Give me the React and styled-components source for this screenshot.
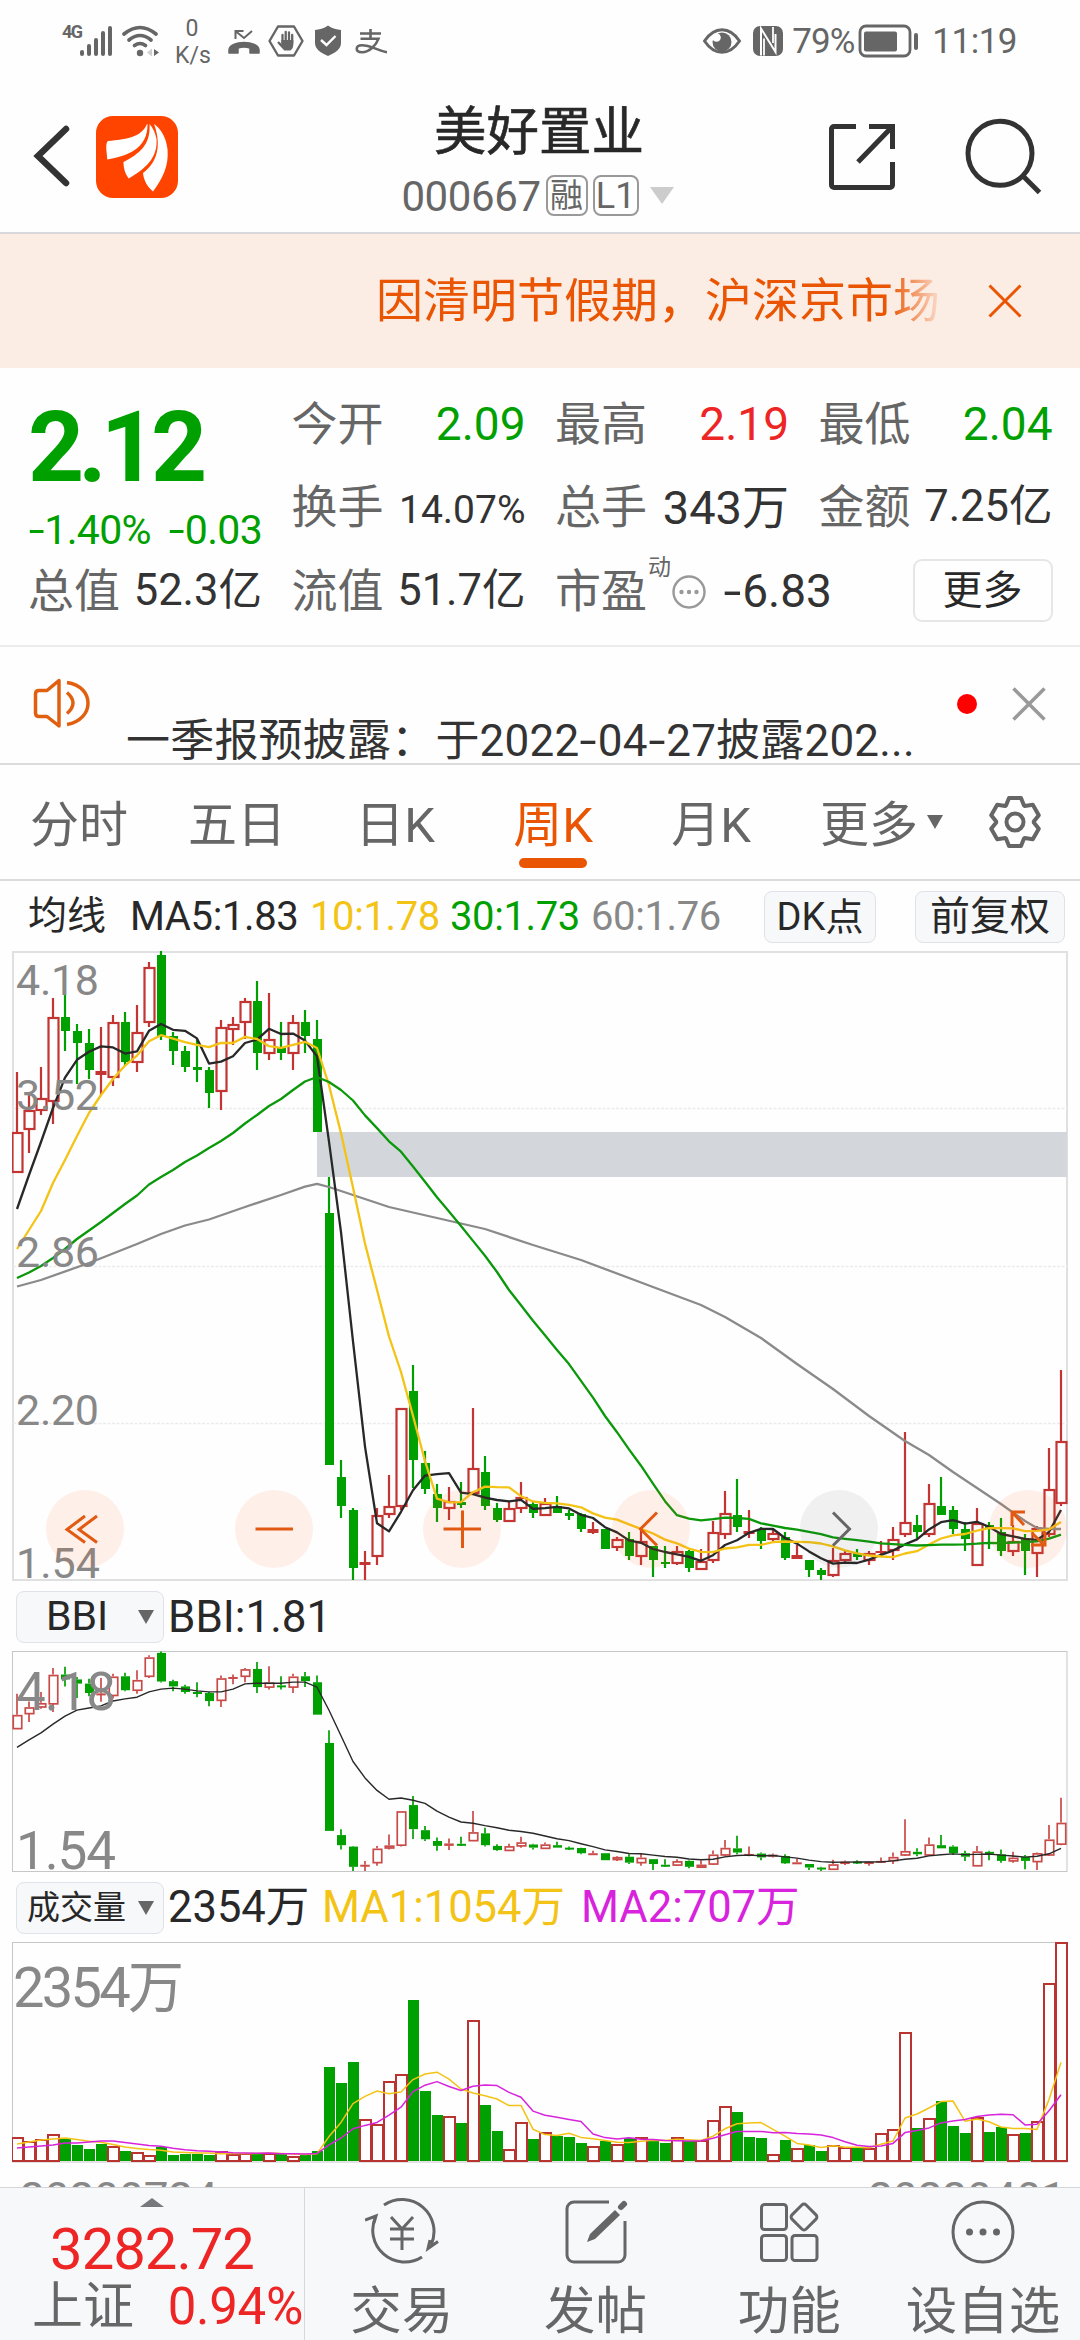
import styled, { createGlobalStyle } from 'styled-components'

const colors = {
  ink: '#282828',
  text: '#333333',
  grey: '#666666',
  muted: '#888888',
  green: '#00a000',
  red: '#ee2525',
  candleRed: '#c23533',
  orange: '#ea5504',
  yellow: '#f3c316',
  purple: '#d823dc',
  panel: '#f7f8fa',
  line: '#dcdcdc',
}

const GlobalStyle = createGlobalStyle`
  * {
    box-sizing: border-box;
  }
  body {
    margin: 0;
    background: #fefefe;
    font-family: Roboto, 'Noto Sans CJK SC', sans-serif;
    line-height: 1;
    color: ${colors.text};
    white-space: nowrap;
  }
  svg {
    display: block;
    flex: none;
  }
`

const Page = styled.main`
  width: 1080px;
  height: 2340px;
  overflow: hidden;
  display: flex;
  flex-direction: column;
`

const Text = styled.span`
  font-size: ${(p) => p.$size}px;
  color: ${(p) => p.$color || colors.text};
  font-weight: ${(p) => p.$weight || 400};
  letter-spacing: ${(p) => p.$track || 0}px;
  width: ${(p) => (p.$width ? `${p.$width}px` : 'auto')};
  margin: ${(p) => p.$margin || 0};
`

const Hyphen = styled.span`
  display: inline-block;
  margin: 0 0.07em;
  transform: scaleX(1.4);
`
const Minus = () => <Hyphen>-</Hyphen>

/* ---------- status bar ---------- */

const StatusBar = styled.div`
  height: 80px;
  flex: none;
  display: flex;
  justify-content: space-between;
  padding: 0 63px 0 62px;
`
const StatusGroup = styled.div`
  display: flex;
  align-items: center;
  height: 81px;
`
const NetSpeed = styled.div`
  width: 34px;
  margin: 2px 18px 0 16px;
  text-align: center;
  font-size: 23px;
  line-height: 27px;
  color: ${colors.grey};
`
const StatusText = styled.span`
  font-size: 35px;
  letter-spacing: ${(p) => p.$track}px;
  margin: 2px ${(p) => p.$right || 0}px 0 ${(p) => p.$left}px;
  color: ${colors.grey};
`
const Generation = styled.span`
  font-size: 18px;
  font-weight: 700;
  letter-spacing: -1.500px;
  margin: -18px 0 0 0;
  width: 17px;
  color: ${colors.grey};
`

const StatusLeftIcons = () => (
  <svg width="160" height="36" viewBox="226 23 160 36" fill="none">
    <path
      d="M228 53v-3c0-10 30-10 30 0v3h-9v-5q-6-2-12 0v5z"
      fill={colors.grey}
      stroke={colors.grey}
      strokeWidth="1.5"
      strokeLinejoin="round"
    />
    <path d="M234.500 39V31h8M235 31.500l8 6.500 8-7" stroke={colors.grey} strokeWidth="2" />
    <path
      d="M277 26.500h16l8.500 14.500-8.500 14.500h-16l-8.500-14.500z"
      stroke={colors.grey}
      strokeWidth="2.400"
      strokeLinejoin="round"
    />
    <path d="M281.500 43V35M284.700 42V31.800M288 42V32.500M291.200 43V35" stroke={colors.grey} strokeWidth="2.300" strokeLinecap="round" />
    <path d="M280.300 40h12v5c0 3-2 5-3 5.500h-6l-6.500-7c-1-1.500 .6-2.600 1.700-1.600l2 1.800z" fill={colors.grey} />
    <path d="M327 25.500c4 3 9 4 13 4.500v13c0 6-6 10-13 13-7-3-13-7-13-13V30c4-.5 9-1.500 13-4.500z" fill={colors.grey} />
    <path d="M320 40l5.500 5 9-9" stroke="#fff" strokeWidth="2.400" />
    <path
      d="M359 33.500h21M369.500 29v10M359.500 38.700h18c-2 6-9 13.500-16.500 13.500-7 0-7-7 0-7 9 0 14 5 25 7"
      stroke={colors.grey}
      strokeWidth="2.600"
    />
  </svg>
)

const Signal = () => (
  <svg width="80" height="32" viewBox="79 24 80 32" fill={colors.grey}>
    <rect x="80" y="49" width="4" height="6" rx="2" />
    <rect x="87" y="43" width="4" height="12" rx="2" />
    <rect x="94" y="37" width="4" height="18" rx="2" />
    <rect x="101" y="30" width="4" height="25" rx="2" />
    <rect x="108" y="25" width="4" height="30" rx="2" />
    <g fill="none" stroke={colors.grey} strokeWidth="3.600" strokeLinecap="round">
      <path d="M124 33q16-13 32 0M129 39q11-9 22 0M134.500 44.500q5.500-4 11 0" />
    </g>
    <circle cx="140" cy="52" r="3.200" />
    <path d="M152 47.500v8l-5-4z" fill="#cfcfcf" />
    <path d="M154 48v7l5-3.500z" />
  </svg>
)

const EyeNfc = () => (
  <svg width="80" height="32" viewBox="703 24 80 32">
    <path d="M704.500 40c10-15 25-15 35 0-10 15-25 15-35 0z" fill="none" stroke={colors.grey} strokeWidth="3" />
    <circle cx="722" cy="41" r="9.500" fill={colors.grey} />
    <circle cx="716.500" cy="36.500" r="4.300" fill="#fefefe" />
    <rect x="753" y="25" width="30" height="30" rx="7" fill={colors.grey} />
    <path d="M761 54.500V27.500L775.500 51V33" fill="none" stroke="#fefefe" strokeWidth="2" />
    <path d="M764 37.500v17M773 26v16" stroke="#fefefe" strokeWidth="1.800" />
  </svg>
)

const Battery = () => (
  <svg width="62" height="34" viewBox="861 23 62 34">
    <rect x="863" y="25" width="50" height="30" rx="6" fill="none" stroke={colors.grey} strokeWidth="2.800" />
    <rect x="867" y="30.500" width="33" height="20" rx="2" fill={colors.grey} />
    <rect x="917" y="32" width="4" height="17" rx="2" fill={colors.grey} />
  </svg>
)

/* ---------- header ---------- */

const Header = styled.header`
  height: 154px;
  flex: none;
  display: flex;
  justify-content: space-between;
  align-items: flex-start;
  border-bottom: 2px solid #d8d8dc;
  padding: 36px 37px 0 33px;
`
const HeaderSide = styled.div`
  width: 215px;
  display: flex;
  justify-content: ${(p) => p.$align};
  gap: ${(p) => p.$gap}px;
`
const TitleBlock = styled.div`
  display: flex;
  flex-direction: column;
  align-items: center;
  margin: -10px 0 0 2px;
`
const Title = styled.h1`
  margin: 0;
  font-size: 52.500px;
  font-weight: 400;
  -webkit-text-stroke: 0.6px ${colors.ink};
  color: ${colors.ink};
`
const CodeRow = styled.div`
  display: flex;
  align-items: center;
  margin: 15px 3px 0 0;
  color: ${colors.grey};
`
const Badge = styled.span`
  height: 41px;
  width: ${(p) => p.$width}px;
  margin-left: 5px;
  border: 2px solid #999;
  border-radius: 8px;
  display: flex;
  align-items: center;
  justify-content: center;
  font-size: ${(p) => p.$size}px;
`
const Caret = styled.i`
  width: 0;
  height: 0;
  border: ${(p) => p.$w}px solid transparent;
  border-bottom: 0;
  border-top: ${(p) => p.$h}px solid ${(p) => p.$color || colors.grey};
  margin-left: ${(p) => p.$left || 0}px;
`

const AppLogo = () => (
  <svg width="82" height="82" viewBox="0 0 82 82">
    <rect width="82" height="82" rx="17" fill="#ff4400" />
    <g fill="#fff">
      <path d="M51 8C45 22 30 23 12 25q-2 1-1.700 8l1 10.500C31 40 52 33 51.500 8z" />
      <path d="M53.500 8C55 29 43 38 27.500 46c0 7 2 12 5.200 16.500C49 53 62 42 60.500 23 59 15 56 11 53.500 8z" />
      <path d="M58 8c7 19 5 37-11 49 1 9 5 14 10 18.500C67 62 73 50 71.500 33 70 21 65 13 58 8z" />
    </g>
  </svg>
)

/* ---------- notice ---------- */

const Notice = styled.div`
  height: 134px;
  flex: none;
  background: #fcede4;
  display: flex;
  align-items: center;
  padding: 0 58px 0 376px;
  justify-content: space-between;
`
const NoticeText = styled.div`
  width: 564px;
  overflow: hidden;
  font-size: 47px;
  line-height: 60px;
  color: ${colors.orange};
  mask-image: linear-gradient(to right, #000 91%, transparent 101%);
`

const Cross = ({ size, color, width }) => (
  <svg width={size} height={size} viewBox="0 0 34 34">
    <path d="M1.500 1.500l31 31M32.500 1.500l-31 31" stroke={color} strokeWidth={width} />
  </svg>
)

/* ---------- quote ---------- */

const Quote = styled.section`
  height: 279px;
  flex: none;
  padding: 14px 0 0 28px;
  display: grid;
  grid-template-columns: repeat(4, 234px);
  grid-template-rows: repeat(3, 83.500px);
  column-gap: 29.500px;
  border-bottom: 2px solid #ececec;
`
const PriceCell = styled.div`
  grid-row: span 2;
  display: flex;
  flex-direction: column;
  padding-top: 17px;
`
const Price = styled.div`
  font-size: 98px;
  font-weight: 700;
  letter-spacing: -6px;
  color: ${colors.green};
`
const Change = styled.div`
  display: flex;
  justify-content: space-between;
  font-size: 41px;
  letter-spacing: -0.700px;
  margin-top: 13px;
  color: ${colors.green};
`
const Cell = styled.div`
  display: flex;
  align-items: center;
  justify-content: ${(p) => p.$justify || 'space-between'};
  height: 83px;

  svg {
    margin: 2px 17px 0 1px;
  }
`
const Label = styled.span`
  font-size: 46px;
  color: ${colors.grey};
`
const Superscript = styled.sup`
  font-size: 23px;
  line-height: 23px;
  align-self: flex-start;
  margin: 7px 0 0 1px;
  color: ${colors.grey};
`
const MoreButton = styled.button`
  width: 140px;
  height: 63px;
  margin-left: auto;
  border: 2px solid #e6e6e6;
  border-radius: 9px;
  background: transparent;
  font: 40px Roboto, 'Noto Sans CJK SC', sans-serif;
  line-height: 1;
  padding: 0;
  color: ${colors.ink};
`

const quoteCells = [
  ['今开', '2.09', colors.green, 46],
  ['最高', '2.19', colors.red, 46],
  ['最低', '2.04', colors.green, 46],
  ['换手', '14.07%', colors.text, 39, '6px 0 0'],
  ['总手', '343万', colors.text, 47],
  ['金额', '7.25亿', colors.text, 43.5],
  ['总值', '52.3亿', colors.text, 43.5],
  ['流值', '51.7亿', colors.text, 43.5],
]

/* ---------- announcement ---------- */

const Announcement = styled.section`
  height: 118px;
  flex: none;
  display: flex;
  align-items: flex-start;
  border-bottom: 2px solid ${colors.line};
  padding: 31px 34px 0 33px;
`
const AnnouncementText = styled.div`
  flex: 1;
  margin: 41px 0 0 35px;
  font-size: 44px;
  letter-spacing: 0.200px;
`
const Dot = styled.i`
  width: 20px;
  height: 20px;
  margin: 16px 35px 0 0;
  border-radius: 50%;
  background: #ff0000;
`

/* ---------- period tabs ---------- */

const Tabs = styled.nav`
  height: 116px;
  flex: none;
  display: flex;
  border-bottom: 2px solid ${colors.line};
`
const Tab = styled.div`
  width: 158px;
  height: 106px;
  display: flex;
  flex-direction: column;
  align-items: center;
  padding-top: 36px;
  font-size: 49px;
  color: ${(p) => (p.$active ? colors.orange : colors.grey)};
  ${(p) =>
    p.$active &&
    `&::after {
      content: '';
      width: 68px;
      height: 10px;
      margin-top: 8px;
      border-radius: 5px;
      background: ${colors.orange};
    }`}
`
const TabCaret = styled.div`
  margin: 50px 0 0 -21px;
`

const gearPoints = Array.from({ length: 6 })
  .flatMap((_, k) =>
    [[-9, -16.5], [-6, -24], [6, -24], [9, -16.5]].map(([x, y]) => {
      const a = (k * Math.PI) / 3
      return `${x * Math.cos(a) - y * Math.sin(a)},${x * Math.sin(a) + y * Math.cos(a)}`
    })
  )
  .join(' ')

const Gear = styled.svg`
  margin: 29px 0 0 44px;
`

/* ---------- charts ---------- */

const Toolbar = styled.div`
  height: 70px;
  flex: none;
  display: flex;
  align-items: center;
  padding: 1px 0 0 ${(p) => p.$left}px;
`
const Pill = styled.div`
  height: 52px;
  width: ${(p) => p.$width}px;
  margin-left: ${(p) => p.$left || 0}px;
  margin-right: ${(p) => p.$right || 0}px;
  padding: 0 ${(p) => (p.$caret ? '9px' : '0')} 0 ${(p) => p.$indent || 0}px;
  border: 1.500px solid #dfe2e8;
  border-radius: 8px;
  background: ${colors.panel};
  display: flex;
  align-items: center;
  justify-content: ${(p) => (p.$caret ? 'space-between' : 'center')};
  font-size: ${(p) => p.$size}px;
  color: ${colors.ink};
`
const ChartBox = styled.section`
  position: relative;
  height: ${(p) => p.$height}px;
  flex: none;
  padding-left: 12px;
`
const ChartControls = styled.div`
  position: absolute;
  left: 46px;
  bottom: 13px;
  width: 1021px;
  display: flex;
  justify-content: space-between;
`
const ControlButton = styled.div`
  width: 78px;
  height: 78px;
  border-radius: 50%;
  background: ${(p) => (p.$disabled ? 'rgba(60, 60, 60, 0.07)' : 'rgba(255, 90, 20, 0.09)')};
`
const Dates = styled.div`
  height: 25px;
  flex: none;
  overflow: hidden;
  display: flex;
  justify-content: space-between;
  padding: 15px 14px 0 20px;
  font-size: 44px;
  color: ${colors.muted};
`

// [rising, high, body top, body bottom, low], measured downwards from 4.18
const candles = [
  [1, 121, 181, 221, 221], [1, 143, 159, 178, 202], [1, 116, 147, 159, 164], [1, 47, 66, 150, 173],
  [0, 44, 66, 80, 100], [0, 73, 80, 92, 133], [0, 78, 92, 119, 128], [1, 76, 120, 124, 144],
  [1, 64, 71, 126, 135], [0, 61, 71, 111, 114], [1, 54, 81, 111, 121], [1, 11, 16, 71, 76],
  [0, 0, 4, 86, 89], [0, 81, 85, 100, 114], [0, 95, 100, 116, 121], [0, 88, 116, 119, 131],
  [0, 116, 119, 142, 157], [1, 69, 76, 140, 159], [1, 66, 73, 78, 94], [1, 47, 50, 71, 88],
  [0, 30, 50, 102, 119], [1, 42, 88, 102, 109], [0, 71, 97, 102, 109], [1, 64, 71, 102, 119],
  [0, 59, 71, 85, 102], [0, 69, 88, 181, 181], [0, 226, 262, 514, 514], [0, 509, 526, 555, 567],
  [0, 557, 559, 617, 629], [1, 600, 611, 614, 629], [1, 557, 564, 605, 614], [1, 524, 555, 563, 567],
  [1, 457, 457, 555, 559], [0, 414, 440, 509, 537], [0, 500, 512, 538, 543], [0, 533, 543, 557, 571],
  [1, 536, 550, 557, 569], [0, 531, 551, 554, 557], [1, 457, 517, 542, 542], [0, 505, 521, 555, 559],
  [0, 552, 557, 569, 571], [1, 551, 557, 570, 571], [1, 531, 546, 557, 562], [0, 551, 553, 562, 567],
  [1, 547, 552, 564, 564], [0, 545, 555, 562, 562], [0, 559, 562, 565, 569], [0, 562, 563, 578, 581],
  [1, 571, 578, 582, 583], [0, 578, 578, 598, 598], [1, 586, 588, 596, 600], [0, 581, 588, 605, 609],
  [1, 579, 590, 605, 614], [0, 595, 595, 609, 626], [0, 595, 611, 613, 617], [1, 595, 600, 612, 614],
  [0, 599, 600, 617, 621], [1, 598, 610, 618, 619], [1, 570, 581, 609, 612], [1, 540, 562, 583, 588],
  [0, 528, 564, 576, 581], [1, 559, 580, 583, 587], [0, 576, 579, 590, 598], [1, 579, 582, 588, 590],
  [0, 581, 586, 607, 609], [1, 594, 604, 608, 608], [0, 609, 609, 619, 626], [0, 617, 619, 624, 629],
  [1, 597, 609, 624, 626], [1, 599, 602, 609, 612], [0, 598, 602, 606, 609], [1, 600, 602, 609, 614],
  [1, 590, 600, 602, 603], [1, 576, 588, 599, 609], [1, 481, 571, 583, 586], [0, 564, 574, 581, 587],
  [1, 533, 552, 583, 586], [0, 526, 555, 564, 564], [0, 555, 559, 578, 583], [0, 571, 578, 588, 600],
  [1, 557, 572, 614, 614], [0, 571, 574, 577, 598], [0, 567, 581, 600, 605], [1, 574, 590, 600, 605],
  [0, 583, 588, 600, 624], [1, 575, 577, 602, 626], [1, 497, 538, 583, 586], [1, 419, 490, 552, 555],
]

const volumes = [
  24, 20, 22, 27, 22, 16, 12, 17, 15, 10, 9, 6, 14, 6, 7, 7, 6, 10, 7, 8, 7, 8, 7, 5, 6, 10, 94, 78, 99, 42,
  37, 80, 87, 161, 70, 46, 45, 38, 141, 56, 30, 12, 39, 22, 29, 25, 24, 18, 15, 20, 17, 23, 24, 20, 18, 24,
  20, 21, 41, 55, 49, 24, 23, 7, 21, 13, 16, 10, 16, 14, 13, 13, 28, 32, 129, 33, 43, 60, 35, 28, 44, 29,
  34, 27, 28, 40, 178, 219,
]
// weeks that closed above their open but below the previous close
const fallingVolume = [7, 61]

const closes = candles.map(([up, , top, bottom]) => (up ? top : bottom))
const xAt = (i) => 17 + 12 * i

const average = (values, i, n) => values.slice(i - n + 1, i + 1).reduce((a, b) => a + b, 0) / n
// the first values come from weeks left of the visible range
const movingAverage = (values, n, seed) => values.map((_, i) => (i < seed.length ? seed[i] : average(values, i, n)))

const ma5 = movingAverage(closes, 5, [258, 224, 191, 157])
const ma10 = movingAverage(closes, 10, [298, 279, 260, 232, 209, 185, 162, 144, 128])
const ma30 = movingAverage(closes, 30, [
  327, 321.5, 315, 307, 298, 288, 279.5, 271, 262, 253, 244.5, 233.5, 226, 219, 211, 204.5, 197, 190, 182,
  172.5, 164, 155, 148, 139, 130.5, 126, 131, 139, 149.5,
])
const ma60 = [
  [0, 335.5], [2, 329], [6, 312], [10, 293], [12, 283], [14, 274.5], [16, 268.5], [19, 256], [22, 244],
  [24, 235.7], [25, 232.8], [26, 236], [28, 244], [31, 256], [35, 267], [39, 278], [43, 294], [47, 309],
  [51, 327], [55, 345], [57, 354], [59, 366], [62, 387], [65, 413], [68, 438], [71, 465], [74, 490],
  [76, 504], [78, 521], [80, 537], [82, 553], [84, 570], [85, 577], [86, 578], [87, 578],
]
const bbiSeed = [
  275, 254, 234, 209, 186, 169, 163, 157, 143, 137, 132, 117, 109, 106, 109, 114, 117, 117, 109, 94, 92, 92, 92, 89, 89,
]
const bbi = closes.map((_, i) =>
  i < bbiSeed.length ? bbiSeed[i] : [3, 6, 12, 24].reduce((sum, n) => sum + average(closes, i, n), 0) / 4
)
const volMa5 = movingAverage(volumes, 5, [17, 19, 21, 22])
const volMa10 = movingAverage(volumes, 10, [13, 14, 15, 16, 18, 18, 19, 20, 20])

const points = (values, fn = (v) => v) => values.map((v, i) => `${xAt(i)},${fn(v).toFixed(1)}`).join(' ')

const Line = ({ pts, color, width = 2.3 }) => (
  <polyline points={pts} fill="none" stroke={color} strokeWidth={width} strokeLinejoin="round" />
)

const Candles = ({ scale = 1, half, wick, red, green }) =>
  candles.map(([up, ...ys], i) => {
    const [high, top, bottom, low] = ys.map((y) => y * scale + (scale === 1 ? 0 : 0.5))
    const x = xAt(i)
    const h = bottom - top
    const solid = !up || h < (scale === 1 ? 5 : 2.5)
    return (
      <g key={i} stroke={up ? red : green} strokeWidth={wick}>
        <path d={`M${x} ${high}V${top}M${x} ${bottom}V${low}`} />
        {solid ? (
          <rect
            x={x - (up ? half : 4)}
            y={top}
            width={up ? half * 2 : 9}
            height={Math.max(h, 2)}
            fill={up ? red : green}
            stroke="none"
          />
        ) : (
          <rect x={x - half + 1} y={top + 1} width={half * 2 - 1} height={h - 1} fill="#fefefe" />
        )}
      </g>
    )
  })

const AxisLabel = ({ y, size, width, x = 16, children }) => (
  <text x={x} y={y} fontSize={size} textLength={width} fill={colors.muted}>
    {children}
  </text>
)

const PriceChart = () => (
  <svg width="1056" height="630" viewBox="12 0 1056 630">
    <rect x="13" y="1" width="1054" height="628" fill="none" stroke="#e0e0e0" strokeWidth="2" />
    <path d="M13 157.500H1067M13 315.500H1067M13 472.500H1067" stroke="#ececec" strokeWidth="1.500" strokeDasharray="3 1.500" />
    <rect x="317" y="181" width="750" height="45" fill="#d3d7dc" />
    <Candles half={5.5} wick={2.2} red={colors.candleRed} green={colors.green} />
    <Line pts={ma60.map(([i, v]) => `${xAt(i)},${v}`).join(' ')} color="#8a8a8a" />
    <Line pts={points(ma5)} color={colors.ink} />
    <Line pts={points(ma10)} color={colors.yellow} />
    <Line pts={points(ma30)} color="#0b980b" />
    <AxisLabel y={44} size={43} width={83}>4.18</AxisLabel>
    <AxisLabel y={159} size={43} width={83}>3.52</AxisLabel>
    <AxisLabel y={316} size={43} width={83}>2.86</AxisLabel>
    <AxisLabel y={474} size={43} width={83}>2.20</AxisLabel>
    <AxisLabel y={627} size={43} width={84}>1.54</AxisLabel>
  </svg>
)

const BbiChart = () => (
  <svg width="1056" height="221" viewBox="12 0 1056 221">
    <rect x="12.500" y="0.500" width="1054.500" height="220" fill="none" stroke="#c6c6c6" />
    <Candles scale={0.349} half={4.75} wick={1.7} red="#c94b49" green={colors.green} />
    <Line pts={points(bbi, (v) => v * 0.35)} color={colors.ink} width={1.4} />
    <AxisLabel y={59} size={53} width={100}>4.18</AxisLabel>
    <AxisLabel y={218} size={53} width={100}>1.54</AxisLabel>
  </svg>
)

const VolumeChart = () => (
  <svg width="1056" height="221" viewBox="12 0 1056 221">
    <rect x="12.500" y="0.500" width="1054.500" height="219.500" fill="none" stroke="#c6c6c6" />
    {volumes.map((v, i) =>
      candles[i][0] && !fallingVolume.includes(i) ? (
        <rect key={i} x={xAt(i) - 5} y={220 - v} width="11" height={v - 1} fill="#fefefe" stroke="#b93431" strokeWidth="2" />
      ) : (
        <rect key={i} x={xAt(i) - 5} y={219 - v} width="11" height={v} fill={colors.green} />
      )
    )}
    <Line pts={points(volMa5, (v) => 219 - v)} color={colors.yellow} width={1.5} />
    <Line pts={points(volMa10, (v) => 219 - v)} color={colors.purple} width={1.5} />
    <AxisLabel x={13} y={65} size={56} width={171}>2354万</AxisLabel>
  </svg>
)

const controls = [
  ['M39 26L21 39.500L39 52.500M51 26L33 39.500L51 52.500'],
  ['M20.500 39H58'],
  ['M20.500 39H58M39.500 20.500V58'],
  ['M45 22.500L28.500 39L45 55.500'],
  ['M33 22.500L49.500 39L33 55.500', true],
  ['M36 22H23V36M23 22L35 35M43 43L56 56M56 42V55H42'],
]

/* ---------- bottom bar ---------- */

const BottomBar = styled.footer`
  height: 153px;
  flex: none;
  display: flex;
  border-top: 1.500px solid #d3d5d8;
  background: ${colors.panel};
`
const IndexPanel = styled.div`
  width: 305px;
  border-right: 1.500px solid #d6d8db;
  display: flex;
  flex-direction: column;
  align-items: center;
  padding-top: 10px;
`
const IndexRow = styled.div`
  width: 100%;
  display: flex;
  justify-content: space-between;
  align-items: center;
  padding: 3px 1px 0 32px;
`
const UpCaret = styled.i`
  border: 12px solid transparent;
  border-top: 0;
  border-bottom: 9px solid #77787c;
`
const NavItem = styled.div`
  flex: 1;
  display: flex;
  flex-direction: column;
  align-items: center;
  padding-top: 9px;
  font-size: 51.500px;
  color: ${colors.grey};

  svg {
    margin-bottom: 19px;
  }
`
const NavIcon = ({ children }) => (
  <svg width="74" height="70" viewBox="-37 -35 74 70" fill="none" stroke={colors.grey} strokeWidth="3">
    {children}
  </svg>
)

const App = () => {
  return (
    <Page>
      <GlobalStyle />
      <StatusBar>
        <StatusGroup>
          <Generation>4G</Generation>
          <Signal />
          <NetSpeed>
            0<br />
            K/s
          </NetSpeed>
          <StatusLeftIcons />
        </StatusGroup>
        <StatusGroup>
          <EyeNfc />
          <StatusText $left={9} $right={4} $track={-1}>79%</StatusText>
          <Battery />
          <StatusText $left={12} $track={-0.5}>11:19</StatusText>
        </StatusGroup>
      </StatusBar>

      <Header>
        <HeaderSide $align="flex-start" $gap={24}>
          <svg width="39" height="82" viewBox="33 116 39 82">
            <path d="M66 129L38 156L66 183" fill="none" stroke={colors.text} strokeWidth="6.500" strokeLinecap="round" />
          </svg>
          <AppLogo />
        </HeaderSide>
        <TitleBlock>
          <Title>美好置业</Title>
          <CodeRow>
            <Text $size={42} $track={-0.4} $color={colors.grey} $margin="2px 0 0">000667</Text>
            <Badge $width={42} $size={33}>融</Badge>
            <Badge $width={46} $size={36}>L1</Badge>
            <Caret $w={12} $h={17} $left={11} $color="#cccccc" />
          </CodeRow>
        </TitleBlock>
        <HeaderSide $align="flex-end" $gap={0}>
          <svg width="215" height="82" viewBox="828 116 215 82" fill="none" stroke={colors.text} strokeWidth="5">
            <path d="M856 126.500h-22a2.500 2.500 0 0 0-2.500 2.500v56a2.500 2.500 0 0 0 2.500 2.500h56a2.500 2.500 0 0 0 2.500-2.500v-23" />
            <path d="M869 126.500h23.500V149M891.500 127.500L858 162" />
            <circle cx="1000" cy="153.300" r="32" />
            <path d="M1023 176l16.500 16.500" />
          </svg>
        </HeaderSide>
      </Header>

      <Notice>
        <NoticeText>因清明节假期，沪深京市场</NoticeText>
        <Cross size={34} color={colors.orange} width={3} />
      </Notice>

      <Quote>
        <PriceCell>
          <Price>2.12</Price>
          <Change>
            <span>
              <Minus />
              1.40%
            </span>
            <span>
              <Minus />
              0.03
            </span>
          </Change>
        </PriceCell>
        {quoteCells.map(([label, value, color, size, margin]) => (
          <Cell key={label}>
            <Label>{label}</Label>
            <Text $size={size} $color={color} $margin={margin}>{value}</Text>
          </Cell>
        ))}
        <Cell $justify="flex-start">
          <Label>市盈</Label>
          <Superscript>动</Superscript>
          <svg width="34" height="34" viewBox="-17 -17 34 34">
            <circle r="15.500" fill="none" stroke="#999" strokeWidth="2.400" />
            <circle cx="-7.500" r="2.200" fill="#999" />
            <circle r="2.200" fill="#999" />
            <circle cx="7.500" r="2.200" fill="#999" />
          </svg>
          <Text $size={46}>
            <Minus />
            6.83
          </Text>
        </Cell>
        <Cell>
          <MoreButton>更多</MoreButton>
        </Cell>
      </Quote>

      <Announcement>
        <svg width="58" height="52" viewBox="33 680 58 52" fill="none" stroke="#e06010" strokeWidth="3.500">
          <path
            d="M59 682.500v45.500l-12-9.500h-8q-3.500 0-3.500-3.500v-19q0-3.500 3.500-3.500h8zM67 694.500q12 10.500 0 21M67 684.500c28 4 28 37 0 42"
            strokeLinejoin="round"
          />
        </svg>
        <AnnouncementText>
          一季报预披露：于2022
          <Minus />
          04
          <Minus />
          27披露202...
        </AnnouncementText>
        <Dot />
        <svg width="34" height="60" viewBox="0 -9 34 60">
          <path d="M1.500 1.500l31 31M32.500 1.500l-31 31" stroke="#999" strokeWidth="3.500" />
        </svg>
      </Announcement>

      <Tabs>
        <Tab>分时</Tab>
        <Tab>五日</Tab>
        <Tab>日K</Tab>
        <Tab $active>周K</Tab>
        <Tab>月K</Tab>
        <Tab>更多</Tab>
        <TabCaret>
          <Caret as="div" $w={8} $h={14} />
        </TabCaret>
        <Gear width="56" height="56" viewBox="-28 -28 56 56" fill="none" stroke={colors.grey} strokeWidth="4">
          <polygon points={gearPoints} strokeLinejoin="round" />
          <circle r="8.500" />
        </Gear>
      </Tabs>

      <Toolbar $left={28}>
        <Text $size={39} $color={colors.ink} $width={102}>均线</Text>
        <Text $size={40} $color={colors.ink} $track={-0.4} $width={180}>MA5:1.83</Text>
        <Text $size={40} $color={colors.yellow} $track={-0.4} $width={140}>10:1.78</Text>
        <Text $size={40} $color={colors.green} $track={-0.4} $width={141}>30:1.73</Text>
        <Text $size={40} $color={colors.muted} $track={-0.4} $width={140}>60:1.76</Text>
        <Pill $width={112} $size={38} $left={33}>DK点</Pill>
        <Pill $width={150} $size={40} $left={39}>前复权</Pill>
      </Toolbar>
      <ChartBox $height={630}>
        <PriceChart />
        <ChartControls>
          {controls.map(([d, disabled]) => (
            <ControlButton key={d} $disabled={disabled}>
              <svg width="78" height="78" fill="none" stroke={disabled ? '#666' : '#e25a12'} strokeWidth="3">
                <path d={d} />
              </svg>
            </ControlButton>
          ))}
        </ChartControls>
      </ChartBox>

      <Toolbar $left={16}>
        <Pill $width={148} $size={41} $right={4} $indent={29} $caret>
          BBI
          <Caret $w={8} $h={14} />
        </Pill>
        <Text $size={44} $color={colors.ink}>BBI:1.81</Text>
      </Toolbar>
      <ChartBox $height={221}>
        <BbiChart />
      </ChartBox>

      <Toolbar $left={16}>
        <Pill $width={148} $size={33} $right={4} $indent={10} $caret>
          成交量
          <Caret $w={8} $h={14} />
        </Pill>
        <Text $size={43.5} $color={colors.ink} $width={154}>2354万</Text>
        <Text $size={43.5} $color={colors.yellow} $width={259}>MA1:1054万</Text>
        <Text $size={43.5} $color={colors.purple}>MA2:707万</Text>
      </Toolbar>
      <ChartBox $height={220}>
        <VolumeChart />
      </ChartBox>
      <Dates>
        <span>20200724</span>
        <span>20220401</span>
      </Dates>

      <BottomBar>
        <IndexPanel>
          <UpCaret />
          <Text $size={58} $color={colors.red} $track={-1} $margin="13px 0 0">3282.72</Text>
          <IndexRow>
            <Text $size={51} $color={colors.grey}>上证</Text>
            <Text $size={51} $color={colors.red} $track={-0.3}>0.94%</Text>
          </IndexRow>
        </IndexPanel>
        <NavItem>
          <NavIcon>
            <path d="M-18-27A32 32 0 0 1 29 13M20 25A32 32 0 0 1-26-16M-37-12L-26-16L-28-9M36 9.500L26 16.500L28 8" />
            <path d="M-11-15L0-3L11-15M-12-3H12M-12 7H12M0-3V18" />
          </NavIcon>
          交易
        </NavItem>
        <NavItem>
          <NavIcon>
            <path d="M13-30H-22a7 7 0 0 0-7 7V23a7 7 0 0 0 7 7H22a7 7 0 0 0 7-7V-11" />
            <path d="M-9 10L-6 2L19-22L24-17L-1 7Z" fill={colors.grey} stroke="none" />
            <path d="M25-25L28-28" strokeWidth="6" strokeLinecap="round" />
          </NavIcon>
          发帖
        </NavItem>
        <NavItem>
          <NavIcon>
            <rect x="-27.500" y="-27.500" width="25" height="25" rx="3" />
            <rect x="-27.500" y="3.500" width="25" height="25" rx="3" />
            <rect x="3" y="3.500" width="25" height="25" rx="3" />
            <rect x="5" y="-25" width="20" height="20" rx="3" transform="rotate(45 15 -15)" />
          </NavIcon>
          功能
        </NavItem>
        <NavItem>
          <NavIcon>
            <circle r="30" />
            <g fill={colors.grey} stroke="none">
              <circle cx="-13.500" r="3.500" />
              <circle r="3.500" />
              <circle cx="13.500" r="3.500" />
            </g>
          </NavIcon>
          设自选
        </NavItem>
      </BottomBar>
    </Page>
  )
}

export default App
